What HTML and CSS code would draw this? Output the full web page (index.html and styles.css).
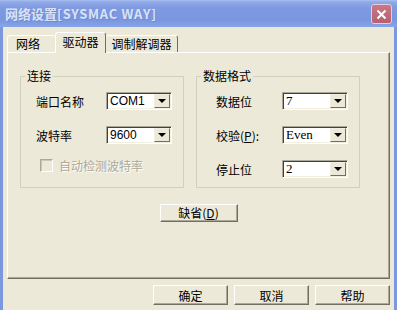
FILE: index.html
```html
<!DOCTYPE html>
<html lang="zh-CN">
<head>
  <meta charset="UTF-8">
  <title>网络设置</title>
  <link rel="stylesheet" href="styles.css">
</head>
<body>

<div class="window">
  <div class="titlebar">
    <span class="title">网络设置<span class="title-latin">[SYSMAC WAY]</span></span>
    <button type="button" class="close">
      <svg width="11" height="11" viewBox="0 0 11 11"><path d="M1.5 1.5L9.5 9.5M9.5 1.5L1.5 9.5" stroke="#fff" stroke-width="2" fill="none"/></svg>
    </button>
  </div>

  <div class="frame">
    <div class="tabs">
      <div class="tab tab-first">网络</div>
      <div class="tab tab-active">驱动器</div>
      <div class="tab tab-last">调制解调器</div>
    </div>

    <div class="panel">
      <div class="groups">
        <fieldset class="group group-left">
          <legend>连接</legend>
          <div class="row">
            <span class="label">端口名称</span>
            <div class="combo"><span class="value">COM1</span><span class="arrow"></span></div>
          </div>
          <div class="row">
            <span class="label">波特率</span>
            <div class="combo"><span class="value">9600</span><span class="arrow"></span></div>
          </div>
          <label class="check">
            <span class="box"></span>
            <span>自动检测波特率</span>
          </label>
        </fieldset>

        <fieldset class="group group-right">
          <legend>数据格式</legend>
          <div class="row">
            <span class="label">数据位</span>
            <div class="combo"><span class="value serif">7</span><span class="arrow"></span></div>
          </div>
          <div class="row">
            <span class="label">校验(<u>P</u>):</span>
            <div class="combo"><span class="value serif">Even</span><span class="arrow"></span></div>
          </div>
          <div class="row">
            <span class="label">停止位</span>
            <div class="combo"><span class="value serif">2</span><span class="arrow"></span></div>
          </div>
        </fieldset>
      </div>

      <div class="default-row">
        <button type="button" class="btn btn-default">缺省(<u>D</u>)</button>
      </div>
    </div>

    <div class="actions">
      <button type="button" class="btn">确定</button>
      <button type="button" class="btn">取消</button>
      <button type="button" class="btn">帮助</button>
    </div>
  </div>
</div>

</body>
</html>
```

FILE: styles.css
```css
body {
  margin: 0;
  font-family: "Noto Sans CJK SC", sans-serif;
  font-size: 12px;
  color: #000;
}
.window {
  width: 397px;
  height: 310px;
  display: flex;
  flex-direction: column;
  background: #ece9d8;
  overflow: hidden;
}
.titlebar {
  flex: none;
  height: 27px;
  display: flex;
  align-items: center;
  justify-content: space-between;
  padding: 0 5px 0 5px;
  background: linear-gradient(to bottom, #a9c0f1 0, #8fa9e8 2px, #7f9ae1 8px, #7a96df 20px, #89a4e9 27px);
}
.title {
  color: #d8e2f7;
  font-weight: bold;
  font-size: 13px;
  text-shadow: 1px 1px #6f89d2;
}
.title-latin {
  letter-spacing: 0.7px;
}
.close {
  width: 21px;
  height: 20px;
  padding: 0;
  margin-top: 1px;
  border: 1px solid #e6ccd6;
  border-radius: 3px;
  background: linear-gradient(to bottom, #c97787, #b7606f);
  display: flex;
  align-items: center;
  justify-content: center;
}
.frame {
  flex: 1;
  border-left: 3px solid #7c97df;
  border-right: 3px solid #7c97df;
  padding: 5px 4px 0 4px;
}

/* tabs */
.tabs {
  display: flex;
  align-items: flex-end;
  height: 20px;
  position: relative;
  z-index: 1;
}
.tab {
  box-sizing: border-box;
  height: 17px;
  line-height: 16px;
  text-align: center;
  border: 1px solid;
  border-bottom: none;
  border-color: #fff #716f64 transparent #fff;
  border-radius: 3px 3px 0 0;
  background: #ece9d8;
}
.tab-first {
  width: 48px;
  text-align: left;
  padding-left: 8px;
  border-right: none;
}
.tab-active {
  width: 51px;
  height: 21px;
  margin-bottom: -1px;
  line-height: 18px;
}
.tab-last {
  width: 72px;
  border-left: none;
}

/* page */
.panel {
  box-sizing: border-box;
  height: 227px;
  border: 1px solid;
  border-color: #fff #716f64 #716f64 #fff;
  box-shadow: inset -1px -1px #aca899;
  padding-top: 16px;
}
.groups {
  display: flex;
  gap: 12px;
  padding-left: 12px;
}
.group {
  box-sizing: border-box;
  width: 164px;
  height: 119px;
  margin: 0;
  padding: 9px 0 0 0;
  border: 1px solid #d0d0bf;
}
.group legend {
  margin-left: 4px;
  padding: 0 2px;
  line-height: 14px;
}
.row {
  display: flex;
  align-items: center;
  height: 18px;
  margin-bottom: 16px;
}
.label {
  flex: none;
  box-sizing: border-box;
  width: 85px;
  padding-left: 15px;
}
.group-right .label {
  padding-left: 19px;
}
.combo {
  box-sizing: border-box;
  width: 66px;
  height: 18px;
  padding: 1px;
  display: flex;
  align-items: center;
  background: #fff;
  border: 1px solid;
  border-color: #aca899 #fff #fff #aca899;
  box-shadow: inset 1px 1px #404040, inset -1px -1px #f1efe2;
}
.value {
  flex: 1;
  padding-left: 2px;
  font-family: "Liberation Sans", sans-serif;
  font-size: 12px;
}
.value.serif {
  font-family: "Liberation Serif", serif;
  font-size: 13px;
}
.arrow {
  box-sizing: border-box;
  width: 16px;
  height: 14px;
  display: flex;
  align-items: center;
  justify-content: center;
  background: #ece9d8;
  border: 1px solid;
  border-color: #f1efe2 #716f64 #716f64 #f1efe2;
}
.arrow::after {
  content: "";
  border-left: 4px solid transparent;
  border-right: 4px solid transparent;
  border-top: 4px solid #000;
}
.check {
  display: flex;
  align-items: center;
  gap: 6px;
  height: 13px;
  margin-top: -1px;
  padding-left: 19px;
  color: #aca899;
  text-shadow: 1px 1px #fff;
}
.check .box {
  box-sizing: border-box;
  width: 13px;
  height: 13px;
  border: 1px solid;
  border-color: #aca899 #fff #fff #aca899;
  box-shadow: inset 1px 1px #cbc8b8;
}

/* buttons */
.default-row {
  display: flex;
  justify-content: center;
  margin-top: 16px;
}
.btn {
  box-sizing: border-box;
  width: 75px;
  height: 20px;
  padding: 0;
  font-family: "Noto Sans CJK SC", sans-serif;
  font-size: 12px;
  color: #000;
  background: #ece9d8;
  border: 1px solid;
  border-color: #fff #716f64 #716f64 #fff;
  box-shadow: inset -1px -1px #aca899;
}
.btn-default {
  width: 78px;
  height: 18px;
  line-height: 14px;
}
.actions {
  display: flex;
  justify-content: flex-end;
  gap: 6px;
  margin-top: 6px;
}
```
